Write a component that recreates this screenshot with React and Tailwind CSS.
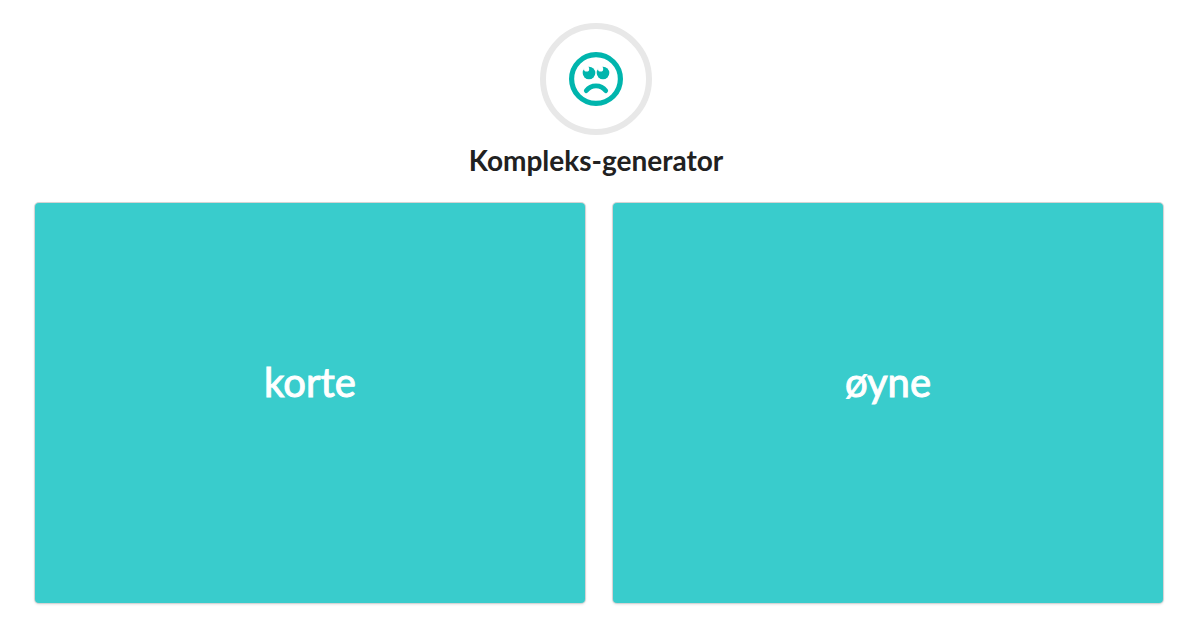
function SadIcon() {
  return (
    <svg viewBox="0 0 54 54" className="size-[54px]" aria-hidden="true">
      <circle cx="27" cy="27" r="24.4" fill="none" stroke="#00b5ad" strokeWidth="5.2" />
      <g fill="#00b5ad">
        <circle cx="20" cy="21" r="6.3" />
        <circle cx="34" cy="21" r="6.3" />
      </g>
      <g fill="#fff">
        <circle cx="17.6" cy="16.9" r="2.6" />
        <circle cx="31.6" cy="16.9" r="2.6" />
      </g>
      <path
        d="M17.3 38.7C22 32.2 32 32.2 36.7 38.7"
        fill="none"
        stroke="#00b5ad"
        strokeWidth="4.8"
        strokeLinecap="round"
      />
    </svg>
  );
}

function WordCard({ word }) {
  return (
    <section className="flex h-[400px] flex-1 items-center justify-center rounded-sm bg-[#39cccc] pb-[42px] text-[40px] leading-[48px] text-white shadow-[0_1px_3px_0_#d4d4d5,0_0_0_1px_#d4d4d5] [-webkit-text-stroke:1px_#fff]">
      <p>{word}</p>
    </section>
  );
}

export default function App() {
  return (
    <main className="bg-white pt-[23px] font-['Lato',sans-serif]">
      <header className="flex flex-col items-center pr-2">
        <div className="flex size-28 items-center justify-center rounded-full border-6 border-[#e8e8e8]">
          <SadIcon />
        </div>
        <h1 className="mt-2 text-[28px] leading-[34px] font-bold text-[#212121]">Kompleks-generator</h1>
      </header>
      <div className="mt-[26px] flex gap-7 pr-[37px] pb-6 pl-[35px]">
        <WordCard word="korte" />
        <WordCard word="øyne" />
      </div>
    </main>
  );
}
